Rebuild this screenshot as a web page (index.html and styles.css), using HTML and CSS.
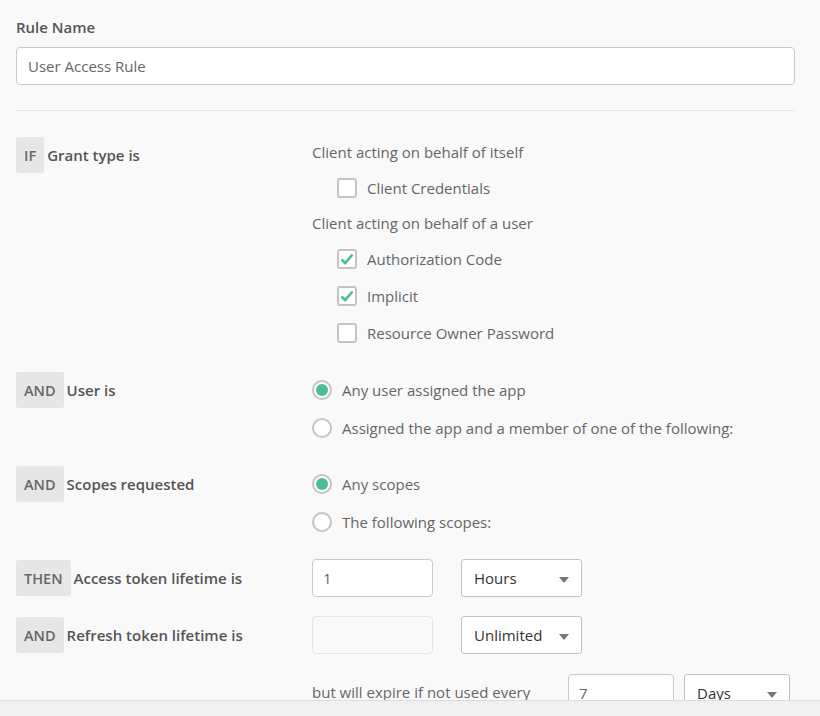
FILE: index.html
```html
<!DOCTYPE html>
<html>
<head>
<meta charset="utf-8">
<link rel="stylesheet" href="styles.css">
</head>
<body>
<div class="page">
  <div class="field-label">Rule Name</div>
  <div class="text-input wide">User Access Rule</div>
  <div class="divider"></div>

  <div class="section s-if">
    <div class="cond"><span class="badge">IF</span><span class="cond-label">Grant type is</span></div>
    <div class="opts">
      <div class="group-head">Client acting on behalf of itself</div>
      <div class="check-row"><span class="checkbox"></span><span>Client Credentials</span></div>
      <div class="group-head">Client acting on behalf of a user</div>
      <div class="check-row"><span class="checkbox"><svg viewBox="0 0 20 20" width="20" height="20"><path d="M4.5 10.5 L8.2 14 L15.5 5.5" fill="none" stroke="#4bbd97" stroke-width="2.6"/></svg></span><span>Authorization Code</span></div>
      <div class="check-row"><span class="checkbox"><svg viewBox="0 0 20 20" width="20" height="20"><path d="M4.5 10.5 L8.2 14 L15.5 5.5" fill="none" stroke="#4bbd97" stroke-width="2.6"/></svg></span><span>Implicit</span></div>
      <div class="check-row"><span class="checkbox"></span><span>Resource Owner Password</span></div>
    </div>
  </div>

  <div class="section s-user">
    <div class="cond"><span class="badge">AND</span><span class="cond-label">User is</span></div>
    <div class="opts">
      <div class="radio-row"><span class="radio on"></span><span>Any user assigned the app</span></div>
      <div class="radio-row"><span class="radio"></span><span>Assigned the app and a member of one of the following:</span></div>
    </div>
  </div>

  <div class="section s-scopes">
    <div class="cond"><span class="badge">AND</span><span class="cond-label">Scopes requested</span></div>
    <div class="opts">
      <div class="radio-row"><span class="radio on"></span><span>Any scopes</span></div>
      <div class="radio-row"><span class="radio"></span><span>The following scopes:</span></div>
    </div>
  </div>

  <div class="section s-then">
    <div class="cond"><span class="badge">THEN</span><span class="cond-label">Access token lifetime is</span></div>
    <div class="opts inline">
      <div class="text-input small">1</div>
      <div class="select">Hours<span class="caret"></span></div>
    </div>
  </div>

  <div class="section s-refresh">
    <div class="cond"><span class="badge">AND</span><span class="cond-label">Refresh token lifetime is</span></div>
    <div class="opts inline">
      <div class="text-input small disabled"></div>
      <div class="select">Unlimited<span class="caret"></span></div>
    </div>
  </div>

  <div class="section s-expire">
    <div class="cond"></div>
    <div class="opts inline">
      <span class="expire-text">but will expire if not used every</span>
      <div class="text-input tiny">7</div>
      <div class="select tiny-sel">Days<span class="caret"></span></div>
    </div>
  </div>
</div>
<div class="footer"></div>
</body>
</html>
```

FILE: styles.css
```css
* { box-sizing: border-box; }
html, body { margin: 0; padding: 0; }
body {
  background: #f9f9f9;
  font-family: "Open Sans", "Lato", sans-serif;
  font-size: 15px;
  color: #666;
  height: 716px;
  overflow: hidden;
}
.page {
  width: 795px;
  padding: 17px 0 0 16px;
}
.field-label {
  font-weight: 600;
  color: #555;
  font-size: 15px;
  line-height: 20px;
}
.text-input {
  background: #fff;
  border: 1px solid #c9c9c9;
  border-radius: 4px;
  color: #666;
  display: flex;
  align-items: center;
  padding: 0 10px;
}
.text-input.wide {
  margin-top: 10px;
  height: 38px;
  width: 779px;
  padding: 0 11px;
}
.divider {
  height: 1px;
  background: #e4e4e4;
  margin-top: 25px;
  width: 779px;
}
.section {
  display: flex;
  align-items: flex-start;
}
.cond {
  width: 296px;
  flex: none;
  display: flex;
  align-items: center;
  margin-top: 1px;
}
.badge {
  background: #e6e6e6;
  border-radius: 3px;
  height: 36px;
  padding: 0 8px;
  display: flex;
  align-items: center;
  font-weight: 600;
  color: #666;
  font-size: 14.5px;
}
.cond-label {
  margin-left: 3px;
  font-weight: 600;
  color: #555;
  font-size: 15px;
}
.opts { display: flex; flex-direction: column; }
.opts.inline { flex-direction: row; align-items: center; }

.s-if { margin-top: 24px; }
.s-if .cond { margin-top: 2px; }
.group-head { height: 34px; display: flex; align-items: center; }
.check-row { height: 37px; display: flex; align-items: center; padding-left: 25px; }
.checkbox {
  width: 20px; height: 20px;
  border: 2px solid #c4c4c4;
  border-radius: 3px;
  background: #fff;
  margin-right: 10px;
  position: relative;
  flex: none;
}
.checkbox svg { position: absolute; left: -2px; top: -2px; }

.s-user { margin-top: 20px; }
.s-scopes { margin-top: 18px; }
.radio-row { height: 38px; display: flex; align-items: center; }
.radio {
  width: 20px; height: 20px;
  border: 2px solid #c4c4c4;
  border-radius: 50%;
  background: #fff;
  margin-right: 10px;
  flex: none;
  position: relative;
}
.radio.on::after {
  content: "";
  position: absolute;
  left: 2px; top: 2px;
  width: 12px; height: 12px;
  border-radius: 50%;
  background: #4bbd97;
}

.s-then { margin-top: 18px; }
.s-refresh { margin-top: 19px; }
.s-expire { margin-top: 20px; }
.text-input.small { width: 121px; height: 38px; }
.text-input.disabled { background: #f9f9f9; border-color: #e4e4e4; }
.select {
  margin-left: 28px;
  width: 121px;
  height: 38px;
  background: #fff;
  border: 1px solid #c2c2c2;
  border-radius: 3px;
  color: #333;
  padding: 0 12px;
  display: flex;
  align-items: center;
  position: relative;
}
.caret {
  position: absolute;
  right: 12px;
  top: 17px;
  width: 0; height: 0;
  border-left: 5px solid transparent;
  border-right: 5px solid transparent;
  border-top: 6px solid #777;
}
.expire-text { width: 256px; flex: none; margin-top: -2px; }
.text-input.tiny { width: 106px; height: 38px; }
.select.tiny-sel { margin-left: 10px; width: 106px; }

.footer {
  position: fixed;
  left: 0; right: 0; bottom: 0;
  height: 16px;
  background: #f0f0f0;
  border-top: 1px solid #dcdcdc;
}
```
